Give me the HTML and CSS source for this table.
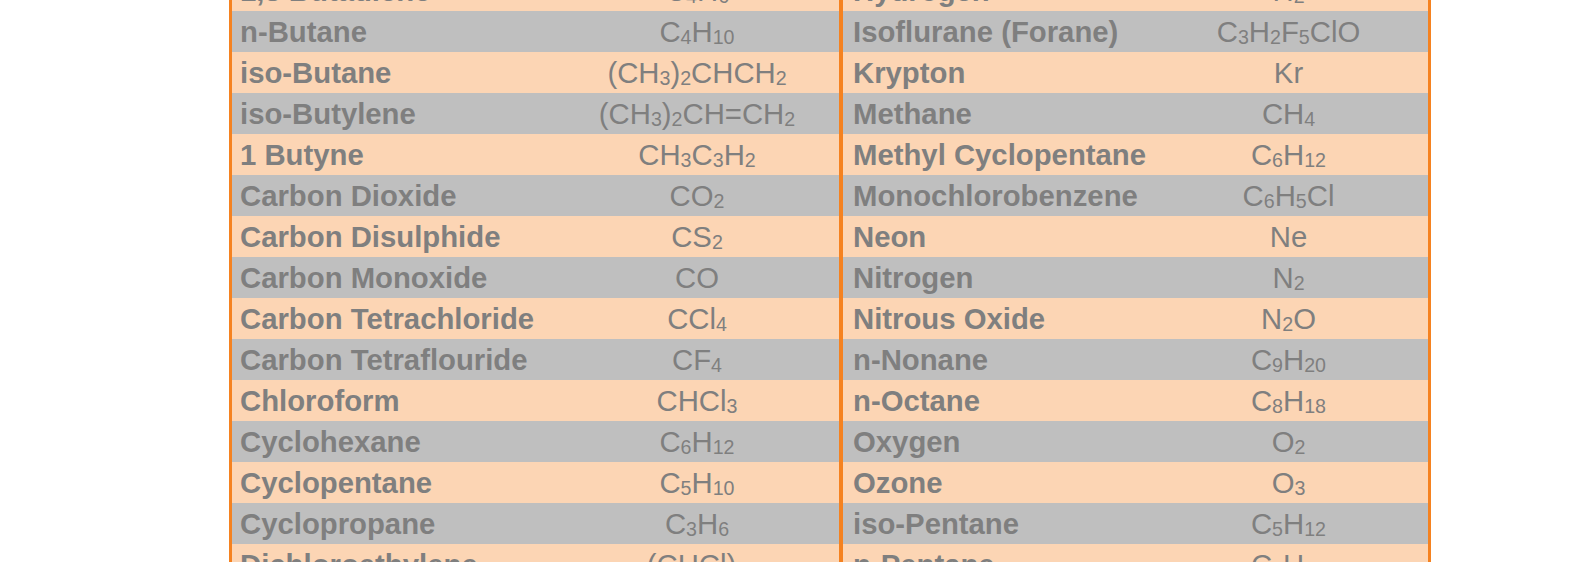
FILE: index.html
```html
<!DOCTYPE html>
<html lang="en">
<head>
<meta charset="utf-8">
<title>Gas formulas</title>
<link rel="stylesheet" href="styles.css">
</head>
<body>
<div class="page">
  <div class="table">
    <div class="row peach"><div class="name">1,3 Butadiene</div><div class="formula">C<sub>4</sub>H<sub>6</sub></div><div class="name second">Hydrogen</div><div class="formula">H<sub>2</sub></div></div>
    <div class="row gray"><div class="name">n-Butane</div><div class="formula">C<sub>4</sub>H<sub>10</sub></div><div class="name second">Isoflurane (Forane)</div><div class="formula">C<sub>3</sub>H<sub>2</sub>F<sub>5</sub>ClO</div></div>
    <div class="row peach"><div class="name">iso-Butane</div><div class="formula">(CH<sub>3</sub>)<sub>2</sub>CHCH<sub>2</sub></div><div class="name second">Krypton</div><div class="formula">Kr</div></div>
    <div class="row gray"><div class="name">iso-Butylene</div><div class="formula">(CH<sub>3</sub>)<sub>2</sub>CH=CH<sub>2</sub></div><div class="name second">Methane</div><div class="formula">CH<sub>4</sub></div></div>
    <div class="row peach"><div class="name">1 Butyne</div><div class="formula">CH<sub>3</sub>C<sub>3</sub>H<sub>2</sub></div><div class="name second">Methyl Cyclopentane</div><div class="formula">C<sub>6</sub>H<sub>12</sub></div></div>
    <div class="row gray"><div class="name">Carbon Dioxide</div><div class="formula">CO<sub>2</sub></div><div class="name second">Monochlorobenzene</div><div class="formula">C<sub>6</sub>H<sub>5</sub>Cl</div></div>
    <div class="row peach"><div class="name">Carbon Disulphide</div><div class="formula">CS<sub>2</sub></div><div class="name second">Neon</div><div class="formula">Ne</div></div>
    <div class="row gray"><div class="name">Carbon Monoxide</div><div class="formula">CO</div><div class="name second">Nitrogen</div><div class="formula">N<sub>2</sub></div></div>
    <div class="row peach"><div class="name">Carbon Tetrachloride</div><div class="formula">CCl<sub>4</sub></div><div class="name second">Nitrous Oxide</div><div class="formula">N<sub>2</sub>O</div></div>
    <div class="row gray"><div class="name">Carbon Tetraflouride</div><div class="formula">CF<sub>4</sub></div><div class="name second">n-Nonane</div><div class="formula">C<sub>9</sub>H<sub>20</sub></div></div>
    <div class="row peach"><div class="name">Chloroform</div><div class="formula">CHCl<sub>3</sub></div><div class="name second">n-Octane</div><div class="formula">C<sub>8</sub>H<sub>18</sub></div></div>
    <div class="row gray"><div class="name">Cyclohexane</div><div class="formula">C<sub>6</sub>H<sub>12</sub></div><div class="name second">Oxygen</div><div class="formula">O<sub>2</sub></div></div>
    <div class="row peach"><div class="name">Cyclopentane</div><div class="formula">C<sub>5</sub>H<sub>10</sub></div><div class="name second">Ozone</div><div class="formula">O<sub>3</sub></div></div>
    <div class="row gray"><div class="name">Cyclopropane</div><div class="formula">C<sub>3</sub>H<sub>6</sub></div><div class="name second">iso-Pentane</div><div class="formula">C<sub>5</sub>H<sub>12</sub></div></div>
    <div class="row peach"><div class="name">Dichloroethylene</div><div class="formula">(CHCl)<sub>2</sub></div><div class="name second">n-Pentane</div><div class="formula">C<sub>5</sub>H<sub>12</sub></div></div>
  </div>
</div>
</body>
</html>
```

FILE: styles.css
```css
html, body {
  margin: 0;
  padding: 0;
  background: #ffffff;
}

.page {
  height: 562px;
  overflow: hidden;
}

.table {
  margin: -30px 0 0 229px;
  width: 1196px;
  border-left: 3px solid #f58220;
  border-right: 3px solid #f58220;
  font-family: "Liberation Sans", Arial, sans-serif;
  color: #7f7f7f;
}

.row {
  display: grid;
  grid-template-columns: 323px 284px 314px 271px;
  height: 41px;
  line-height: 41px;
}

.peach { background: #fcd5b4; }
.gray { background: #bfbfbf; }

.name {
  font-weight: bold;
  font-size: 29.3px;
  padding-left: 8px;
  white-space: nowrap;
}

.second {
  border-left: 4px solid #f58220;
  padding-left: 10px;
}

.formula {
  font-size: 29.3px;
  text-align: center;
  white-space: nowrap;
}

.formula sub {
  font-size: 0.67em;
  vertical-align: -0.1em;
  line-height: 0;
}
```
